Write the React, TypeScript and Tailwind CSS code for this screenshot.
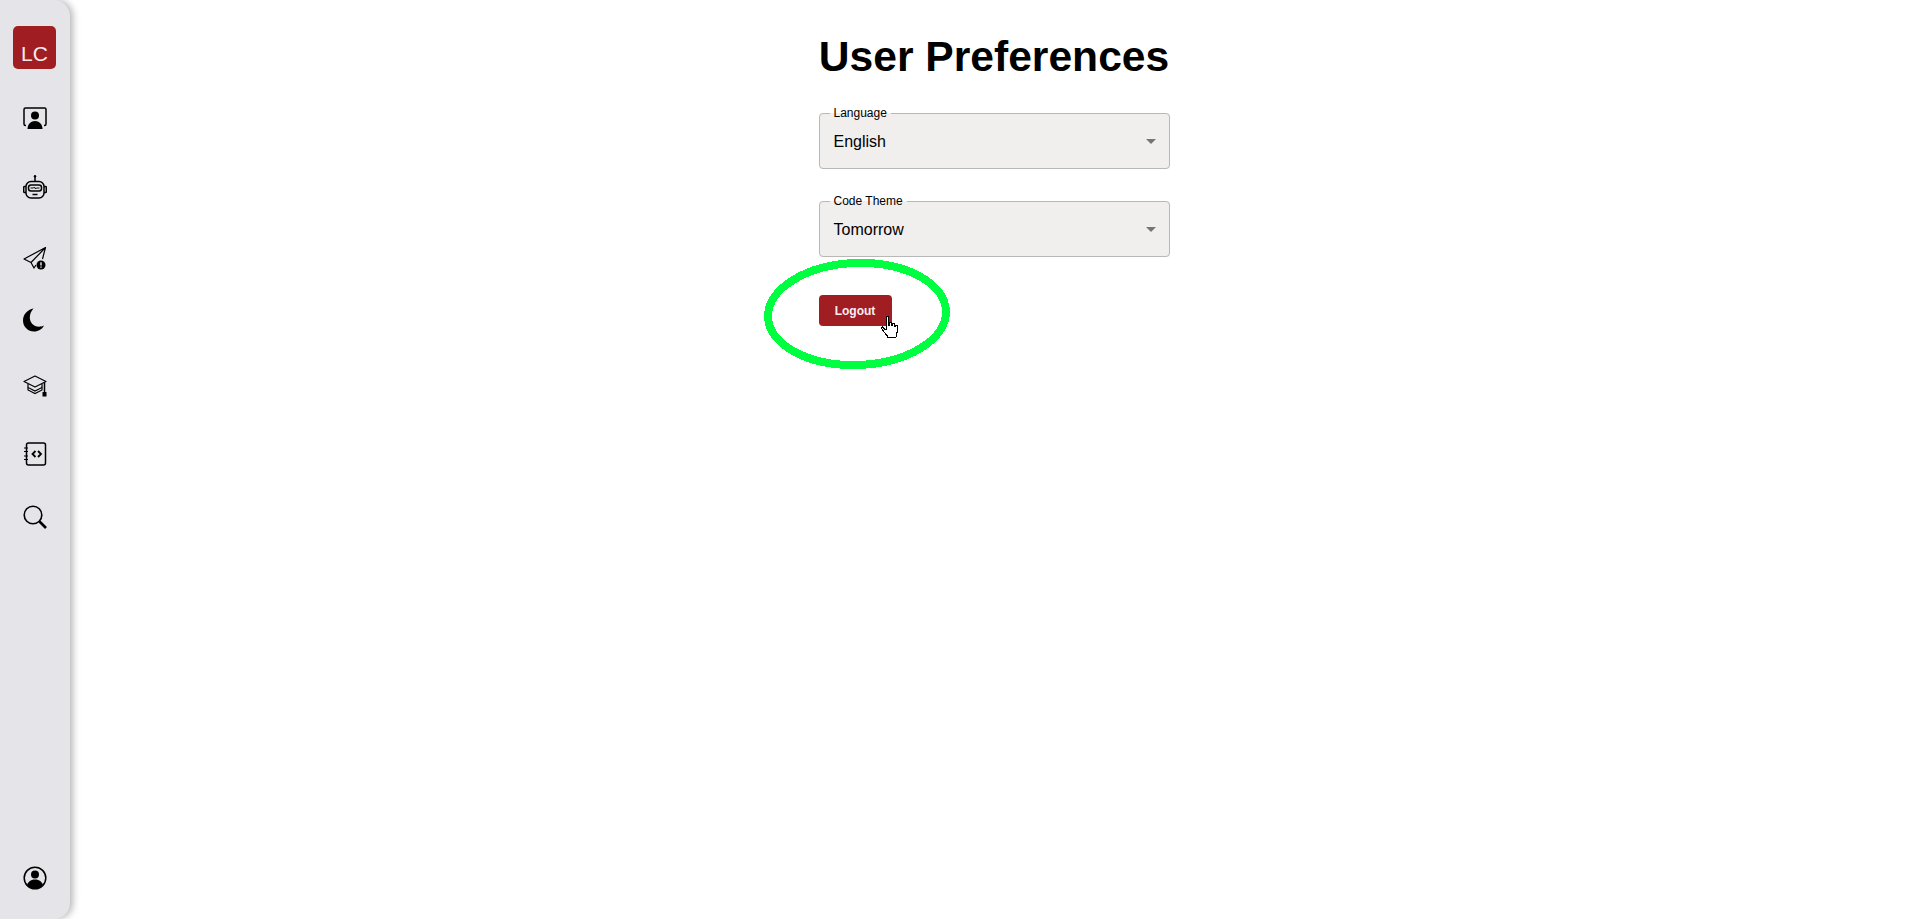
import React from "react";

const IconFrame = ({ children, className = "" }: { children: React.ReactNode; className?: string }) => (
  <div className={`flex items-center justify-center h-[24px] w-[24px] ${className}`}>
    <svg viewBox="0 0 24 24" width="24" height="24" fill="none" stroke="#000" strokeWidth="1.5">
      {children}
    </svg>
  </div>
);

function Select({ label, value, className = "" }: { label: string; value: string; className?: string }) {
  return (
    <fieldset className={`w-[351px] h-[63px] border border-[#b9b8b7] rounded-[4px] bg-[#f0efee] px-[10px] ${className}`}>
      <legend className="ml-0 px-[4px] text-[12px] leading-[14px] text-black">{label}</legend>
      <div className="flex items-center justify-between pl-[4px] pr-[8px] h-[47px] -mt-[2px]">
        <span className="text-[16px] leading-[24px] text-black">{value}</span>
        <span className="w-0 h-0 -mr-[5px] border-l-[5px] border-r-[5px] border-t-[5px] border-l-transparent border-r-transparent border-t-[#757575]" />
      </div>
    </fieldset>
  );
}

export default function App() {
  return (
    <div className="relative flex h-[919px] overflow-hidden bg-white font-['Liberation_Sans',Arial,sans-serif]">
      <aside className="w-[70px] h-[919px] shrink-0 flex flex-col items-center justify-between bg-[#e4e4e9] rounded-r-[16px] shadow-[3px_0_7px_rgba(0,0,0,0.28)] pt-[26px] pb-[29px] pr-[1px]">
        <div className="flex flex-col items-center">
          <div className="w-[43px] h-[43px] rounded-[5px] bg-[#a01d22] flex items-center justify-center pt-[12px] text-[21px] leading-[24px] text-[#f5ecec]">
            LC
          </div>
          <IconFrame className="mt-[37px]">
            <path d="M3 19.500H2.500a1.500 1.500 0 0 1-1.500-1.500V3.500A1.500 1.500 0 0 1 2.500 2h19A1.500 1.500 0 0 1 23 3.500V18a1.500 1.500 0 0 1-1.500 1.500H21" />
            <circle cx="12" cy="9.500" r="4" fill="#000" stroke="none" />
            <path d="M4.500 23c0-5 3.500-8 7.500-8s7.500 3 7.500 8z" fill="#000" stroke="none" />
          </IconFrame>
          <IconFrame className="mt-[45px]">
            <path d="M12 1.500v5" />
            <circle cx="12" cy="1.300" r="1.200" fill="#000" stroke="none" />
            <rect x="3" y="6.500" width="18" height="16.500" rx="5" />
            <rect x="5.500" y="10" width="13" height="6" rx="2.500" />
            <path d="M7.500 13h3l1-1 1 2 1-1h3" strokeWidth="1" />
            <path d="M9.500 19.500h5" />
            <path d="M3 11.500H1.500q-.8 0-.8 1v4q0 1 .8 1H3M21 11.500h1.500q.8 0 .8 1v4q0 1-.8 1H21" />
          </IconFrame>
          <IconFrame className="mt-[47px]">
            <path d="M22.500 1.500 1 13l7 3.500L22.500 1.500zM22.500 1.500 19.500 13M8 16.500l3 5.500 2-3" strokeLinejoin="round" strokeWidth="1.200" />
            <circle cx="18" cy="19" r="4.500" fill="#000" stroke="none" />
            <path d="M18 16.200v3.300M18 20.500v1.200" stroke="#fff" strokeWidth="1.300" />
          </IconFrame>
          <IconFrame className="mt-[38px]">
            <path
              d="M10.500 0.500C4.500 1.500 0 6.500 0 12.500 0 18.800 5 23.500 11 23.500c4.500 0 8.300-2.500 10-6-1.500.8-3.500 1.200-5 1.200C10.500 18.700 6.800 14.500 6.800 9.500c0-3.500 1.500-6.700 3.700-9z"
              fill="#000"
              stroke="none"
            />
          </IconFrame>
          <IconFrame className="mt-[42px]">
            <path d="M12 2 1 7.500 12 13l11-5.500L12 2z" strokeLinejoin="round" strokeWidth="1.200" />
            <path d="M5 10v3.500l7 3.500 7-3.500V10" strokeWidth="1.200" />
            <path d="M5 13.500V16l7 3.500L19 16v-2.500" strokeWidth="1.200" />
            <path d="M21.500 8.500V18" />
            <rect x="19.500" y="18" width="4" height="4.500" fill="#000" stroke="none" />
          </IconFrame>
          <IconFrame className="mt-[44px]">
            <rect x="3.500" y="1" width="19" height="22" rx="2" />
            <path d="M1 6h4M1 9.500h4M1 14h4M1 17.500h4" strokeWidth="1.200" />
            <path d="M12.500 9 9.500 12l3 3M15 9l3 3-3 3" strokeWidth="1.800" />
          </IconFrame>
          <IconFrame className="mt-[39px]">
            <circle cx="10" cy="10" r="8.800" strokeWidth="1.600" />
            <path d="m16.500 16.500 6.500 6.500" strokeWidth="2.600" />
          </IconFrame>
        </div>
        <IconFrame>
          <circle cx="12" cy="12" r="10.800" />
          <circle cx="12" cy="8.500" r="4" fill="#000" stroke="none" />
          <path d="M4 19c1.500-4 4.500-5.500 8-5.500s6.500 1.500 8 5.500c-2 2.700-5 4-8 4s-6-1.300-8-4z" fill="#000" stroke="none" />
        </IconFrame>
      </aside>

      <main className="flex-1 flex justify-center pr-[2px]">
        <div className="w-[351px] pt-[29px] flex flex-col items-start">
          <h1 className="text-[42.6px] leading-[54px] font-bold text-black whitespace-nowrap w-full text-center">User Preferences</h1>
          <Select label="Language" value="English" className="mt-[23px]" />
          <Select label="Code Theme" value="Tomorrow" className="mt-[25px]" />
          <button className="mt-[38px] w-[73px] h-[31px] rounded-[4px] bg-[#a01d22] text-[#f8f0f0] text-[12px] font-bold">
            Logout
          </button>
        </div>
      </main>

      <svg className="absolute left-[760px] top-[255px]" width="196" height="118" viewBox="0 0 196 118" fill="none" shapeRendering="crispEdges">
        <ellipse cx="97" cy="59" rx="89" ry="51" stroke="#00ff40" strokeWidth="8" transform="rotate(-2 97 59)" />
      </svg>
      <svg className="absolute left-[881px] top-[316px]" width="18" height="22" viewBox="0 0 18 22" shapeRendering="crispEdges">
        <path
          d="M5 .500h2v9h1v-3h2v3h1v-2h2v3h1v-1h2v7l-1 5H6v-2L3 16 .500 12l1-1 2 2h1.500z"
          fill="#fff"
          stroke="#000"
          strokeWidth="1"
        />
      </svg>
    </div>
  );
}
